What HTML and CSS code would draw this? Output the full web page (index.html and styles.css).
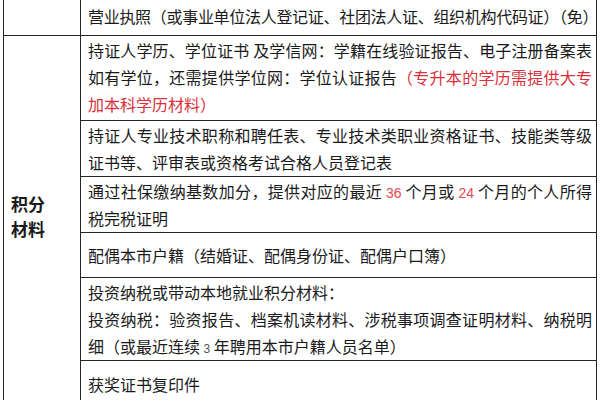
FILE: index.html
```html
<!DOCTYPE html>
<html lang="zh-CN">
<head>
<meta charset="utf-8">
<title>积分材料</title>
<link rel="stylesheet" href="styles.css">
</head>
<body>
<table class="sheet">
  <colgroup>
    <col class="col-label">
    <col class="col-body">
  </colgroup>
  <tr class="r1">
    <td class="label"></td>
    <td class="body"><span class="ln j tight">营业执照（或事业单位法人登记证、社团法人证、组织机构代码证）（免）</span></td>
  </tr>
  <tr class="r2">
    <td class="label group" rowspan="6"><span class="lbl">积分</span><span class="lbl">材料</span></td>
    <td class="body"><span class="ln j">持证人学历、学位证书 及学信网：学籍在线验证报告、电子注册备案表</span><span class="ln j">如有学位，还需提供学位网：学位认证报告<span class="red">（专升本的学历需提供大专</span></span><span class="ln red">加本科学历材料）</span></td>
  </tr>
  <tr class="r3">
    <td class="body"><span class="ln j">持证人专业技术职称和聘任表、专业技术类职业资格证书、技能类等级</span><span class="ln">证书等、评审表或资格考试合格人员登记表</span></td>
  </tr>
  <tr class="r4">
    <td class="body"><span class="ln j">通过社保缴纳基数加分，提供对应的最近 <span class="num red">36</span> 个月或 <span class="num red">24</span> 个月的个人所得</span><span class="ln">税完税证明</span></td>
  </tr>
  <tr class="r5">
    <td class="body"><span class="ln">配偶本市户籍（结婚证、配偶身份证、配偶户口簿）</span></td>
  </tr>
  <tr class="r6">
    <td class="body"><span class="ln">投资纳税或带动本地就业积分材料：</span><span class="ln j">投资纳税：验资报告、档案机读材料、涉税事项调查证明材料、纳税明</span><span class="ln">细（或最近连续 <span class="num small">3</span> 年聘用本市户籍人员名单）</span></td>
  </tr>
  <tr class="r7">
    <td class="body"><span class="ln">获奖证书复印件</span></td>
  </tr>
</table>
</body>
</html>
```
FILE: styles.css
```css
html, body {
  margin: 0;
  background: #ffffff;
}

body {
  font-family: "Noto Sans CJK SC", "Noto Sans", sans-serif;
  color: #1a1a1a;
  overflow: hidden;
}

.sheet {
  border-collapse: collapse;
  table-layout: fixed;
  width: 594px;
  margin: -8px 0 0 3px;
}

.col-label {
  width: 77px;
}

.sheet td {
  border: 1px solid #262626;
  vertical-align: middle;
  font-size: 16px;
  line-height: 27px;
}

.body {
  padding: 1px 4px 0 7px;
}

.label {
  padding: 0 4px 0 7px;
}

.group {
  padding-bottom: 14px;
}

.ln {
  display: block;
  text-align: left;
}

.ln.j {
  text-align: justify;
  text-align-last: justify;
}

.tight {
  letter-spacing: -0.3px;
}

.red {
  color: #d9303a;
}

.num {
  font-family: "Liberation Sans", Arial, sans-serif;
  font-size: 14px;
  line-height: 1;
}

.num.red {
  color: #e04a50;
}

.num.small {
  font-size: 12px;
  color: #555555;
}

.lbl {
  display: block;
  font-size: 17px;
  font-weight: 700;
  line-height: 25px;
  color: #1a1a1a;
}

.r1 .body {
  padding-top: 10px;
  padding-bottom: 5px;
}

.r2 .body {
  padding-top: 1px;
  padding-bottom: 2px;
}

.r3 .body,
.r4 .body {
  padding-top: 1px;
  padding-bottom: 0;
}

.r5 .body {
  padding-top: 9px;
  padding-bottom: 8px;
}

.r6 .body {
  padding-top: 1px;
  padding-bottom: 0;
}

.r7 .body {
  padding-top: 10px;
  padding-bottom: 12px;
}
```
